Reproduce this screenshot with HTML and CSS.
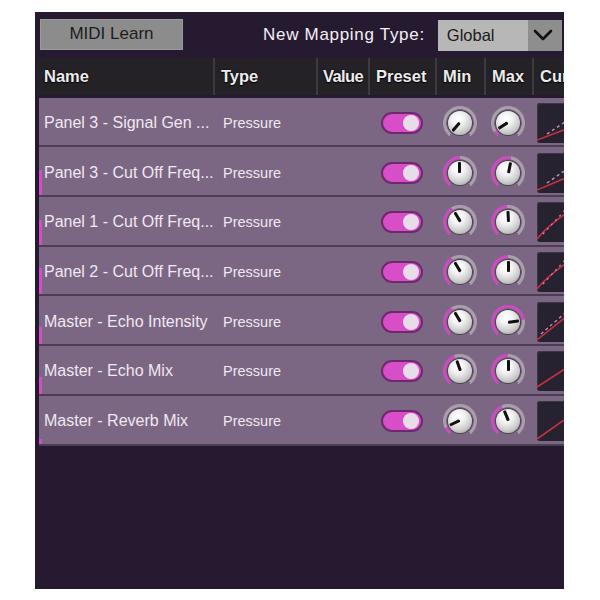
FILE: index.html
```html
<!DOCTYPE html>
<html lang="en">

<head>
    <meta charset="UTF-8">
    <meta name="viewport" content="width=device-width, initial-scale=1.0">
    <title>MIDI Mapping</title>
    <link rel="stylesheet" href="styles.css">
</head>

<body>
    <div class="panel">
        <div class="topbar">
            <button class="learn-button">MIDI Learn</button>
            <span class="mapping-label">New Mapping Type:</span>
            <div class="select">
                <span class="select-value">Global</span>
                <span class="select-arrow">
                    <svg width="20" height="12" viewBox="0 0 20 12">
                        <path d="M2 2 L10 10 L18 2" fill="none" stroke="#111" stroke-width="2.6" stroke-linecap="round" stroke-linejoin="round" />
                    </svg>
                </span>
            </div>
        </div>

        <div class="table-header">
            <div class="th">Name</div>
            <div class="th">Type</div>
            <div class="th th-value">Value</div>
            <div class="th">Preset</div>
            <div class="th">Min</div>
            <div class="th">Max</div>
            <div class="th">Curve</div>
        </div>

        <div class="rows">
            <div class="row">
                <span class="level" style="--lvl:0px"></span>
                <div class="cell-name">Panel 3 - Signal Gen ...</div>
                <div class="cell-type">Pressure</div>
                <div></div>
                <div class="cell-center"><span class="toggle"></span></div>
                <div class="cell-center"><div class="knob" style="--v:0"><span class="cap"><i></i></span></div></div>
                <div class="cell-center"><div class="knob" style="--v:0.06"><span class="cap"><i></i></span></div></div>
                <div class="curve">
                    <svg width="40" height="40" viewBox="0 0 40 40">
                        <path d="M0 37 L40 22" fill="none" stroke="#c8303f" stroke-width="1.6" />
                        <path d="M10 31 L40 11" fill="none" stroke="#c990bd" stroke-width="1.4" stroke-dasharray="3 3" />
                    </svg>
                </div>
            </div>

            <div class="row">
                <span class="level" style="--lvl:25px"></span>
                <div class="cell-name">Panel 3 - Cut Off Freq...</div>
                <div class="cell-type">Pressure</div>
                <div></div>
                <div class="cell-center"><span class="toggle"></span></div>
                <div class="cell-center"><div class="knob" style="--v:0.5"><span class="cap"><i></i></span></div></div>
                <div class="cell-center"><div class="knob" style="--v:0.54"><span class="cap"><i></i></span></div></div>
                <div class="curve">
                    <svg width="40" height="40" viewBox="0 0 40 40">
                        <path d="M0 37 L40 20" fill="none" stroke="#c8303f" stroke-width="1.6" />
                        <path d="M10 30 L40 9" fill="none" stroke="#c990bd" stroke-width="1.4" stroke-dasharray="3 3" />
                    </svg>
                </div>
            </div>

            <div class="row">
                <span class="level" style="--lvl:25px"></span>
                <div class="cell-name">Panel 1 - Cut Off Freq...</div>
                <div class="cell-type">Pressure</div>
                <div></div>
                <div class="cell-center"><span class="toggle"></span></div>
                <div class="cell-center"><div class="knob" style="--v:0.39"><span class="cap"><i></i></span></div></div>
                <div class="cell-center"><div class="knob" style="--v:0.49"><span class="cap"><i></i></span></div></div>
                <div class="curve">
                    <svg width="40" height="40" viewBox="0 0 40 40">
                        <path d="M0 37 Q12 22 40 4" fill="none" stroke="#c8303f" stroke-width="1.6" />
                        <path d="M6 32 L30 6" fill="none" stroke="#c990bd" stroke-width="1.2" stroke-dasharray="2 4" />
                    </svg>
                </div>
            </div>

            <div class="row">
                <span class="level" style="--lvl:26px"></span>
                <div class="cell-name">Panel 2 - Cut Off Freq...</div>
                <div class="cell-type">Pressure</div>
                <div></div>
                <div class="cell-center"><span class="toggle"></span></div>
                <div class="cell-center"><div class="knob" style="--v:0.39"><span class="cap"><i></i></span></div></div>
                <div class="cell-center"><div class="knob" style="--v:0.5"><span class="cap"><i></i></span></div></div>
                <div class="curve">
                    <svg width="40" height="40" viewBox="0 0 40 40">
                        <path d="M0 37 Q12 22 40 4" fill="none" stroke="#c8303f" stroke-width="1.6" />
                        <path d="M6 32 L30 6" fill="none" stroke="#c990bd" stroke-width="1.2" stroke-dasharray="2 4" />
                    </svg>
                </div>
            </div>

            <div class="row">
                <span class="level" style="--lvl:17px"></span>
                <div class="cell-name">Master - Echo Intensity</div>
                <div class="cell-type">Pressure</div>
                <div></div>
                <div class="cell-center"><span class="toggle"></span></div>
                <div class="cell-center"><div class="knob" style="--v:0.39"><span class="cap"><i></i></span></div></div>
                <div class="cell-center"><div class="knob" style="--v:0.79"><span class="cap"><i></i></span></div></div>
                <div class="curve">
                    <svg width="40" height="40" viewBox="0 0 40 40">
                        <path d="M0 38 L40 6" fill="none" stroke="#c8303f" stroke-width="1.6" />
                        <path d="M4 32 L36 4" fill="none" stroke="#c990bd" stroke-width="1.3" stroke-dasharray="3 3" />
                    </svg>
                </div>
            </div>

            <div class="row">
                <span class="level" style="--lvl:17px"></span>
                <div class="cell-name">Master - Echo Mix</div>
                <div class="cell-type">Pressure</div>
                <div></div>
                <div class="cell-center"><span class="toggle"></span></div>
                <div class="cell-center"><div class="knob" style="--v:0.43"><span class="cap"><i></i></span></div></div>
                <div class="cell-center"><div class="knob" style="--v:0.5"><span class="cap"><i></i></span></div></div>
                <div class="curve">
                    <svg width="40" height="40" viewBox="0 0 40 40">
                        <path d="M0 36 L40 10" fill="none" stroke="#c8303f" stroke-width="1.6" />
                    </svg>
                </div>
            </div>

            <div class="row">
                <span class="level" style="--lvl:5px"></span>
                <div class="cell-name">Master - Reverb Mix</div>
                <div class="cell-type">Pressure</div>
                <div></div>
                <div class="cell-center"><span class="toggle"></span></div>
                <div class="cell-center"><div class="knob" style="--v:0.09"><span class="cap"><i></i></span></div></div>
                <div class="cell-center"><div class="knob" style="--v:0.42"><span class="cap"><i></i></span></div></div>
                <div class="curve">
                    <svg width="40" height="40" viewBox="0 0 40 40">
                        <path d="M0 38 L40 10" fill="none" stroke="#c8303f" stroke-width="1.6" />
                    </svg>
                </div>
            </div>
        </div>
    </div>
</body>

</html>
```

FILE: styles.css
```css
:root {
    --panel-color: #261a30;
    --header-color: #242226;
    --row-color: #7b6783;
    --row-line: #4b3e52;
    --pink: #cc4cc0;
    --ring: #a99fab;
    --text-light: #f0e8f2;
}

body {
    margin: 0;
    padding: 12px 0 0 35px;
    background-color: #ffffff;
    font-family: 'Liberation Sans', Arial, sans-serif;
}

.panel {
    width: 529px;
    height: 577px;
    box-sizing: border-box;
    padding-left: 2px;
    background-color: var(--panel-color);
    overflow: hidden;
}

/* top bar */

.topbar {
    height: 46px;
    display: flex;
    align-items: center;
    padding-left: 3px;
}

.learn-button {
    width: 143px;
    height: 31px;
    margin-top: -2px;
    background-color: #8c8c8c;
    border: 1px solid #9b9b9b;
    color: #1c1c1c;
    font-family: inherit;
    font-size: 17px;
    padding: 0;
}

.mapping-label {
    margin-left: 80px;
    color: #f4f0f6;
    font-size: 17px;
    letter-spacing: 0.7px;
    white-space: nowrap;
}

.select {
    margin-left: 13px;
    width: 124px;
    height: 31px;
    flex-shrink: 0;
    display: flex;
    background-color: #b7b7b7;
}

.select-value {
    flex: 1;
    padding-left: 9px;
    line-height: 31px;
    font-size: 16.5px;
    color: #1a1a1a;
}

.select-arrow {
    width: 34px;
    background-color: #8e8e8e;
    display: flex;
    align-items: center;
    padding-left: 5px;
    box-sizing: border-box;
}

/* table */

.table-header {
    height: 37px;
    display: grid;
    grid-template-columns: 176px 103px 52px 67px 49px 48px 60px;
    background-color: var(--header-color);
}

.th {
    display: flex;
    align-items: center;
    padding-left: 6px;
    border-left: 2px solid #3c3a40;
    color: #ececec;
    font-weight: bold;
    font-size: 16.5px;
    white-space: nowrap;
    overflow: hidden;
    text-shadow: 0 1px 1px #000, 0 0 2px #000;
}

.th:first-child {
    border-left: none;
    padding-left: 7px;
}

.th-value {
    letter-spacing: -0.6px;
    padding-left: 5px;
}

.rows {
    padding-top: 2.7px;
}

.row {
    height: 49.7px; /* includes the dark line under each row */
    box-sizing: border-box;
    padding-top: 3px;
    margin-left: 2px;
    display: grid;
    grid-template-columns: 3px 171px 103px 52px 67px 49px 48px 60px;
    align-items: center;
    background-color: var(--row-color);
    border-bottom: 2.2px solid var(--row-line);
}

.level {
    align-self: end;
    height: var(--lvl);
    background-color: #d24fc3;
}

.cell-name {
    padding-left: 2px;
    color: var(--text-light);
    font-size: 16px;
    white-space: nowrap;
}

.cell-type {
    padding-left: 10px;
    color: var(--text-light);
    font-size: 14.5px;
}

.cell-center {
    display: flex;
    justify-content: center;
    align-items: center;
}

.toggle {
    width: 42px;
    height: 22px;
    box-sizing: border-box;
    border-radius: 11px;
    border: 2px solid #6c2a6b;
    background-color: #d84dc8;
    display: flex;
    justify-content: flex-end;
    align-items: center;
    padding-right: 2px;
}

.toggle::after {
    content: '';
    width: 16px;
    height: 16px;
    border-radius: 50%;
    background-color: #e7dde9;
}

/* knobs: --v is the value from 0 to 1 */

.knob {
    width: 34px;
    height: 34px;
    border-radius: 50%;
    display: flex;
    justify-content: center;
    align-items: center;
    background:
        radial-gradient(circle, var(--row-color) 0 13.6px, transparent 14.1px),
        conic-gradient(from -140deg, var(--pink) 0 calc(var(--v) * 280deg), var(--ring) 0 280deg, transparent 0);
}

.cap {
    width: 24px;
    height: 24px;
    border-radius: 50%;
    background: radial-gradient(circle at 42% 32%, #ffffff 0, #f2f2f2 30%, #c9c9c9 65%, #8a8a8a 100%);
    box-shadow: 0 0 0 1px #4d4550;
}

.cap i {
    display: flex;
    justify-content: center;
    width: 100%;
    height: 100%;
    transform: rotate(calc(-140deg + var(--v) * 280deg));
}

.cap i::after {
    content: '';
    width: 3px;
    height: 11px;
    margin-top: 1px;
    border-radius: 1px;
    background-color: #111111;
}

.curve {
    width: 40px;
    height: 40px;
    margin-left: 5px;
    border-radius: 3px;
    background-color: #27222f;
    box-shadow: inset 1px 1px 0 #3d3645;
    overflow: hidden;
}

.curve svg {
    display: block;
}
```
